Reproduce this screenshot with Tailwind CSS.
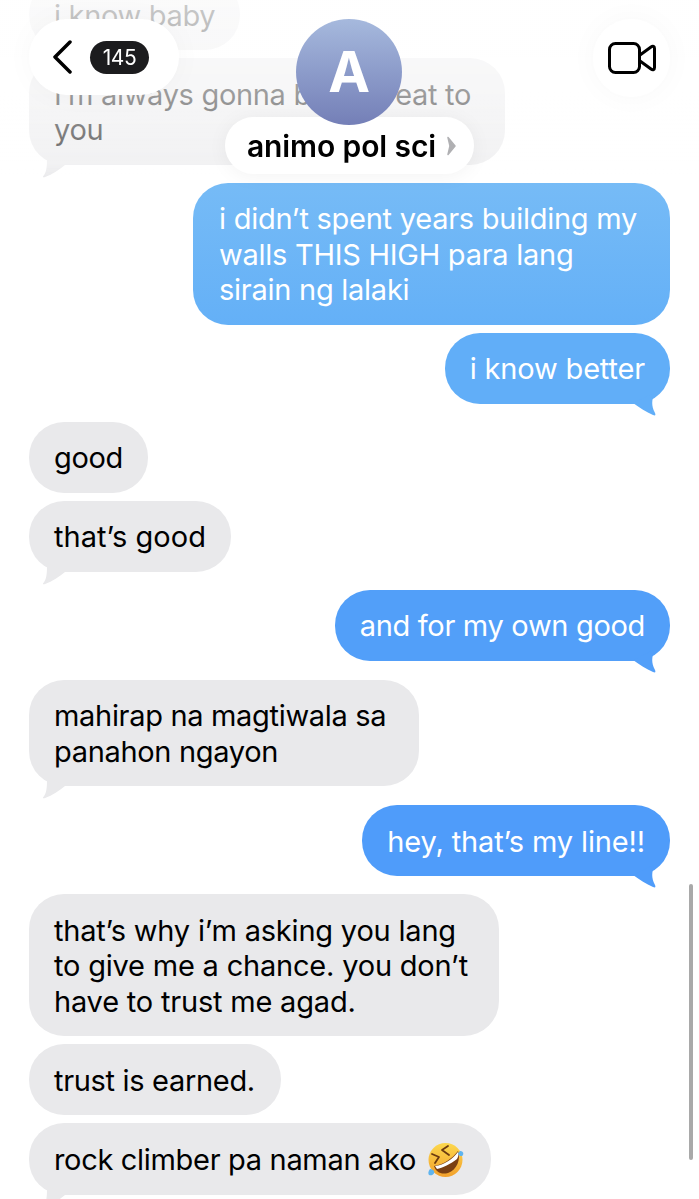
<!DOCTYPE html>
<html lang="en">
<head>
    <meta charset="UTF-8">
    <meta name="viewport" content="width=device-width, initial-scale=1.0">
    <title>animo pol sci</title>
    <script src="https://cdn.jsdelivr.net/npm/@tailwindcss/browser@4"></script>
</head>
<body class="bg-white">
<div class="relative w-[699px] h-[1199px] overflow-hidden bg-white font-['Inter',sans-serif] text-[29px] leading-[35.5px] tracking-[-0.32px] text-black">

    <!-- messages -->
    <div class="flex flex-col px-[29px] -mt-[21px]">
        <div class="self-start bg-[#e9e9eb] rounded-[35px] px-[25px] pt-[18.75px] pb-[16.75px]">i know baby</div>

        <div class="relative self-start mt-[8px] w-[476px] bg-[#e9e9eb] rounded-[35px] px-[25px] pt-[18.75px] pb-[16.75px]">
            I’m always gonna be a threat to you
            <svg class="absolute left-[10px] bottom-[-13px] w-[40px] h-[30px]" viewBox="0 0 40 30"><path fill="#e9e9eb" d="M8 8C8 18 8 24 4 28.5C3.5 29.5 4.5 29.5 5.5 29.2C14 26 20 22 26 17Z"/></svg>
        </div>

        <div class="relative self-end mt-[18px] w-[477px] bg-linear-to-b from-[#76bbf6] to-[#64b0f7] text-white rounded-[35px] px-[26px] pt-[18.75px] pb-[16.75px] tracking-[-0.26px]">
            i didn’t spent years building my walls THIS HIGH para lang sirain ng lalaki
        </div>
        <div class="relative self-end mt-[8px] bg-[#61aef8] text-white rounded-[35px] px-[25px] pt-[18.75px] pb-[16.75px] tracking-[-0.17px]">
            i know better
            <svg class="absolute right-[10px] bottom-[-13px] w-[40px] h-[30px]" viewBox="0 0 40 30"><path fill="#61aef8" d="M34 6C32 14 31 18 35 26C36 28.5 35 29 33 28C26 25 20 21 13 16Z"/></svg>
        </div>

        <div class="self-start mt-[18px] bg-[#e9e9eb] rounded-[35px] px-[25px] pt-[18.75px] pb-[16.75px]">good</div>
        <div class="relative self-start mt-[8px] bg-[#e9e9eb] rounded-[35px] px-[25px] pt-[18.75px] pb-[16.75px] tracking-[0.04px]">
            that’s good
            <svg class="absolute left-[10px] bottom-[-13px] w-[40px] h-[30px]" viewBox="0 0 40 30"><path fill="#e9e9eb" d="M8 8C8 18 8 24 4 28.5C3.5 29.5 4.5 29.5 5.5 29.2C14 26 20 22 26 17Z"/></svg>
        </div>

        <div class="relative self-end mt-[18px] bg-[#529ff9] text-white rounded-[35px] px-[25px] pt-[18.75px] pb-[16.75px]">
            and for my own good
            <svg class="absolute right-[10px] bottom-[-13px] w-[40px] h-[30px]" viewBox="0 0 40 30"><path fill="#529ff9" d="M34 6C32 14 31 18 35 26C36 28.5 35 29 33 28C26 25 20 21 13 16Z"/></svg>
        </div>

        <div class="relative self-start mt-[19px] w-[390px] bg-[#e9e9eb] rounded-[35px] px-[25px] pt-[18.75px] pb-[16.75px]">
            mahirap na magtiwala sa panahon ngayon
            <svg class="absolute left-[10px] bottom-[-13px] w-[40px] h-[30px]" viewBox="0 0 40 30"><path fill="#e9e9eb" d="M8 8C8 18 8 24 4 28.5C3.5 29.5 4.5 29.5 5.5 29.2C14 26 20 22 26 17Z"/></svg>
        </div>

        <div class="relative self-end mt-[19px] bg-[#4f9cfa] text-white rounded-[35px] px-[25px] pt-[18.75px] pb-[16.75px] tracking-[-0.13px]">
            hey, that’s my line!!
            <svg class="absolute right-[10px] bottom-[-13px] w-[40px] h-[30px]" viewBox="0 0 40 30"><path fill="#4f9cfa" d="M34 6C32 14 31 18 35 26C36 28.5 35 29 33 28C26 25 20 21 13 16Z"/></svg>
        </div>

        <div class="self-start mt-[18px] w-[470px] bg-[#e9e9eb] rounded-[35px] px-[25px] pt-[18.75px] pb-[16.75px] tracking-[-0.2px]">
            that’s why i’m asking you lang to give me a chance. you don’t have to trust me agad.
        </div>
        <div class="self-start mt-[8px] w-[252px] bg-[#e9e9eb] rounded-[35px] px-[25px] pt-[18.75px] pb-[16.75px]">trust is earned.</div>
        <div class="relative self-start mt-[8px] bg-[#e9e9eb] rounded-[35px] pl-[25px] pr-[27px] pt-[18.75px] pb-[16.75px] flex items-center gap-[11px]">
            <span>rock climber pa naman ako</span>
            <svg class="w-[37px] h-[36px] shrink-0" viewBox="0 0 37 36">
                <defs>
                    <linearGradient id="face" x1="0" y1="0" x2="0" y2="1"><stop offset="0" stop-color="#fcd84d"/><stop offset="1" stop-color="#f2a02c"/></linearGradient>
                </defs>
                <circle cx="18.5" cy="18" r="17" fill="url(#face)"/>
                <path d="M7 24C16 23 26 16 31 9C34 17 30 28 21 31C14 33 9 30 7 24Z" fill="#7a3f12"/>
                <path d="M8 24C17 23 26 17 31 10C32 13 31 15 30 17C24 22 15 26 10 27Z" fill="#fff"/>
                <path d="M5 12L12 15L8 21M15 8L21 4M15 8L22 13" fill="none" stroke="#6b3a10" stroke-width="1.800" stroke-linecap="round" stroke-linejoin="round"/>
                <path d="M33 9C35 9 37 10 36 13C35 15 32 14 31 12C31 11 32 10 33 9Z" fill="#5fb4ee"/>
                <path d="M3 27C1 29 1 32 2 33C5 34 8 32 7 29C6 28 5 27 3 27Z" fill="#5fb4ee"/>
            </svg>
            <svg class="absolute left-[10px] bottom-[-13px] w-[40px] h-[30px]" viewBox="0 0 40 30"><path fill="#e9e9eb" d="M8 8C8 18 8 24 4 28.5C3.5 29.5 4.5 29.5 5.5 29.2C14 26 20 22 26 17Z"/></svg>
        </div>
    </div>

    <!-- scroll indicator -->
    <div class="absolute right-[6px] top-[884px] w-[4px] h-[276px] rounded-full bg-[#a9a9a9]"></div>

    <!-- blur fade behind the header -->
    <div class="absolute inset-x-0 top-0 h-[182px] backdrop-blur-[0.6px] bg-linear-to-b from-white/80 via-white/62 to-white/35 [mask-image:linear-gradient(to_bottom,black_90%,transparent)]"></div>

    <!-- header -->
    <div class="absolute inset-x-[29px] top-[19px] flex justify-between items-start">
        <div class="flex items-center gap-[18px] w-[150px] h-[76px] pl-[23px] bg-white rounded-full shadow-[0_0_30px_rgba(0,0,0,0.03)]">
            <svg class="w-[20px] h-[34px]" viewBox="0 0 20 34"><path d="M18 2L3 17L18 32" fill="none" stroke="#000" stroke-width="3.500" stroke-linecap="round" stroke-linejoin="round"/></svg>
            <div class="w-[59px] h-[33px] rounded-full bg-[#1c1c1e] text-white text-[21px] leading-[33px] tracking-[-0.5px] text-center">145</div>
        </div>

        <div class="absolute left-[195px] top-0 w-[250px] flex flex-col items-center">
            <div class="relative z-10 w-[106px] h-[106px] rounded-full bg-linear-to-b from-[#a6b9dd] to-[#747fb7] flex items-center justify-center text-white text-[56px] font-bold leading-none">A</div>
            <div class="-mt-[8px] w-[249px] h-[57px] pl-[5px] rounded-full bg-white flex items-center justify-center gap-[11px] shadow-[0_2px_20px_rgba(0,0,0,0.05)]">
                <span class="text-[30px] font-semibold leading-none tracking-[-0.1px]">animo pol sci</span>
                <svg class="w-[9px] h-[20px]" viewBox="0 0 9 20"><path d="M1 1.500L8 10L1 18.500L3 10Z" fill="#b0b0b3" stroke="#b0b0b3" stroke-width="1.500" stroke-linejoin="round"/></svg>
            </div>
        </div>

        <div class="w-[77px] h-[78px] rounded-full bg-white flex items-center justify-center shadow-[0_0_30px_rgba(0,0,0,0.03)]">
            <svg class="w-[48px] h-[32px]" viewBox="0 0 48 32">
                <rect x="1.500" y="1.500" width="30" height="29" rx="6" fill="none" stroke="#000" stroke-width="3"/>
                <path d="M32 13L43 5C45 3.500 46.500 4.500 46.500 6.500V25.500C46.500 27.500 45 28.500 43 27L32 19" fill="none" stroke="#000" stroke-width="3" stroke-linejoin="round"/>
            </svg>
        </div>
    </div>
</div>
</body>
</html>
